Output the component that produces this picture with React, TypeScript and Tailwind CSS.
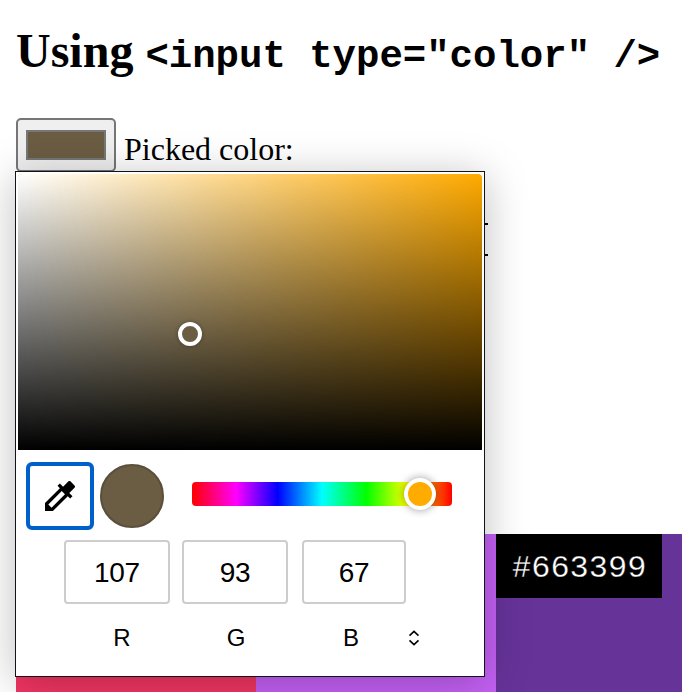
import React from "react";

const channels = [
  { name: "R", value: "107", box: "ml-12 w-[106px]", label: "ml-[67px] w-[74px]" },
  { name: "G", value: "93", box: "ml-3 w-[106px]", label: "ml-[36px] w-[82px]" },
  { name: "B", value: "67", box: "ml-[14px] w-[104px]", label: "ml-8 w-[84px]" },
];

function Eyedropper() {
  return (
    <svg className="shrink-0" width="40" height="40" viewBox="0 0 24 24" fill="#000">
      <path d="M20.71 5.63l-2.34-2.34c-.39-.39-1.02-.39-1.41 0l-3.12 3.12-1.93-1.91-1.41 1.41 1.42 1.42L3 16.25V21h4.75l8.92-8.92 1.42 1.42 1.41-1.41-1.92-1.92 3.12-3.12c.4-.4.4-1.03.01-1.42zM6.92 19L5 17.08l8.06-8.06 1.92 1.92L6.92 19z" />
    </svg>
  );
}

function Picker() {
  return (
    <div className="absolute left-[15px] top-[171px] z-10 h-[506px] w-[470px] border border-[#15131a] bg-white p-0.5 font-['Liberation_Sans',sans-serif] shadow-[0_6px_40px_rgba(0,0,0,0.26)]">
      <div className="relative h-[276px] rounded-t bg-[#ffab00]">
        <div className="absolute inset-0 rounded-t bg-[linear-gradient(to_top,#000,transparent),linear-gradient(to_right,#fff,transparent)]" />
        <div className="absolute left-[160px] top-[148px] size-6 rounded-full border-4 border-white bg-[#6b5d43] shadow-[0_0_4px_rgba(0,0,0,0.3)]" />
      </div>
      <div className="flex h-[90px] pl-2 pt-3">
        <div className="flex size-[68px] items-center justify-center rounded-md border-4 border-[#0060cb]">
          <Eyedropper />
        </div>
        <div className="ml-1.5 mt-0.5 size-16 rounded-full border-2 border-[#5a4f3b] bg-[#6b5d43]" />
        <div className="relative ml-7 mt-5 h-6 w-[260px] rounded bg-[linear-gradient(to_right,#f00_0%,#f0f_17%,#00f_33%,#0ff_50%,#0f0_67%,#ff0_83%,#f00_100%)]">
          <div className="absolute -top-1 left-[212px] size-8 rounded-full border-4 border-white bg-[#ffab00] shadow-[0_0_8px_rgba(0,0,0,0.4)]" />
        </div>
      </div>
      <div className="flex -ml-0.5">
        {channels.map((c) => (
          <div key={c.name} className={`${c.box} flex h-16 items-center justify-center rounded border-2 border-[#cdcdcd] pt-0.5 text-[28px] leading-none tracking-[-0.3px]`}>
            {c.value}
          </div>
        ))}
      </div>
      <div className="flex items-center pt-4 text-2xl leading-9">
        {channels.map((c) => (
          <div key={c.name} className={`${c.label} text-center`}>{c.name}</div>
        ))}
        <svg className="ml-[15px]" width="12" height="16" viewBox="0 0 12 16" fill="none" stroke="#000" strokeWidth="1.6">
          <path d="M1.5 5.6L6 1.3 10.5 5.6M1.5 10.4L6 14.7 10.5 10.4" />
        </svg>
      </div>
    </div>
  );
}

export default function App() {
  return (
    <div className="relative h-[692px] w-[682px] overflow-hidden bg-white font-['Liberation_Serif',serif] text-black">
      <h1 className="h-[118px] whitespace-pre pl-4 pt-6 text-[48px] font-bold leading-[54px]">
        Using <code className="font-['Liberation_Mono',monospace] text-[39px]">{'<input type="color" />'}</code>
      </h1>
      <div className="flex h-[54px] pl-4">
        <div className="h-[54px] w-[100px] rounded-[5px] border-2 border-[#767676] bg-[#efefef] px-2 py-2.5">
          <div className="h-[30px] border-2 border-[#777777] bg-[#6b5d43]" />
        </div>
        <span className="ml-2 mt-3 text-[32px] leading-[38px]">Picked color:</span>
      </div>
      <div className="ml-4 mt-[51px] h-[33px] w-[472px] border-y-2 border-black" />
      <div className="ml-4 mt-[278px] flex h-[158px] w-[720px]">
        <div className="w-[240px] bg-[#f33563]" />
        <div className="w-[240px] bg-[#c561f6]" />
        <div className="w-[240px] bg-[#663399]">
          <div className="h-16 w-[166px] bg-black pl-4 font-['Liberation_Mono',monospace] text-[32px] leading-[69px] text-white [-webkit-text-stroke:0.3px_#000]">#663399</div>
        </div>
      </div>
      <Picker />
    </div>
  );
}
